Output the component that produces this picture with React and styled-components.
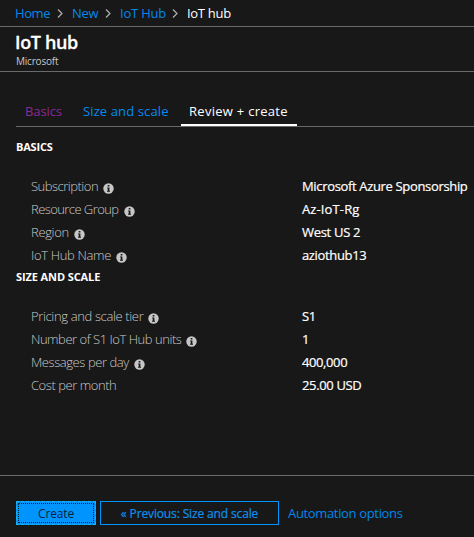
import React from "react";
import styled, { createGlobalStyle } from "styled-components";

const GlobalStyle = createGlobalStyle`
  * { box-sizing: border-box; }
  body { margin: 0; background: #181818; overflow: hidden; }
`;

const Blade = styled.div`
  display: flex;
  flex-direction: column;
  width: 474px;
  height: 537px;
  background: #181818;
  color: #fff;
  font: 400 13px/20px "Open Sans", "Noto Sans", sans-serif;
  white-space: nowrap;
`;

const Text = styled.span`
  letter-spacing: ${(p) => p.$tracking || 0}px;
`;

const Breadcrumb = styled.nav`
  display: grid;
  grid-template-columns: 57px 48px 67px auto;
  height: 27px;
  padding: 3px 0 0 15px;
  border-bottom: 1px solid #6a6a6a;
`;

const Crumb = styled.div`
  display: flex;
  align-items: center;
  justify-content: space-between;
  height: 20px;
  color: ${(p) => (p.$current ? "#fff" : "#0088ea")};
`;

const Chevron = styled.svg`
  width: 6px;
  height: 9px;
  margin-right: ${(p) => p.$gap}px;
  fill: none;
  stroke: #b0b0b0;
  stroke-width: 1.2;
`;

const Header = styled.header`
  height: 45px;
  padding: 3px 0 0 15px;
  border-bottom: 1px solid #6a6a6a;
`;

const Title = styled.h1`
  margin: 0;
  font-size: 18px;
  line-height: 24px;
  font-weight: 600;
  letter-spacing: -0.35px;
  -webkit-text-stroke: 0.3px #fff;
`;

const Publisher = styled.div`
  margin: 0 0 0 1px;
  color: #c8c8c8;
  font-size: 10px;
  line-height: 14px;
  letter-spacing: -0.2px;
`;

const Tabs = styled.div`
  display: flex;
  align-items: flex-end;
  height: 55px;
  margin-left: 16px;
  border-bottom: 1px solid #6a6a6a;
`;

const Tab = styled.div`
  width: ${(p) => p.$width}px;
  height: 26px;
  padding: 1px 0 0 ${(p) => p.$inset}px;
  border-bottom: 2px solid ${(p) => (p.$active ? "#fff" : "transparent")};
  color: ${(p) => p.$color};
`;

const Section = styled.section`
  height: ${(p) => p.$height}px;
  padding: ${(p) => p.$top}px 0 0 16px;
`;

const SectionTitle = styled.h2`
  margin: 0 0 20px;
  font-size: 11px;
  line-height: 16px;
  font-weight: 700;
  letter-spacing: ${(p) => p.$tracking}px;
`;

const Row = styled.div`
  display: grid;
  grid-template-columns: 271px auto;
  height: 23px;
  padding-left: 15px;
  line-height: 23px;
`;

const Label = styled.div`
  display: flex;
  align-items: center;
  gap: 5px;
  color: #c8c8c8;
  font-weight: 300;
`;

const Value = styled.div`
  font-weight: 400;
  -webkit-text-stroke: 0.2px #fff;
`;

const InfoIcon = styled.svg`
  width: 11px;
  height: 11px;
  margin-top: 3px;
`;

const Footer = styled.footer`
  display: flex;
  align-items: flex-start;
  height: 62px;
  margin-top: auto;
  padding: 25px 0 0 16px;
  border-top: 1px solid #6a6a6a;
`;

const Button = styled.button`
  display: flex;
  align-items: center;
  justify-content: center;
  height: 24px;
  width: ${(p) => p.$width}px;
  margin: 0 4px 0 0;
  padding: 2px 0 0;
  font: 400 12px/20px "Open Sans", "Noto Sans", sans-serif;
`;

const CreateButton = styled(Button)`
  border: 1px dashed #18b4ee;
  background: #0094ff;
  color: #06233c;
  outline: 1px dotted #05192b;
  outline-offset: -3px;
`;

const PreviousButton = styled(Button)`
  border: 1px solid #0094ff;
  background: transparent;
  color: #0c90ee;
  -webkit-text-stroke: 0.2px #0c90ee;
`;

const FooterLink = styled.a`
  margin-left: 5px;
  color: #0088ea;
  line-height: 25px;
`;

const crumbs = [
  ["Home", -0.4, 9],
  ["New", -0.3, 9],
  ["IoT Hub", -0.2, 9],
  ["IoT hub", -0.3, 0],
];

const basics = [
  ["Subscription", -0.5, true, "Microsoft Azure Sponsorship", -0.34],
  ["Resource Group", -0.57, true, "Az-IoT-Rg", 0.12],
  ["Region", -0.35, true, "West US 2", -0.3],
  ["IoT Hub Name", -0.34, true, "aziothub13", -0.35],
];

const scale = [
  ["Pricing and scale tier", -0.36, true, "S1", -0.3],
  ["Number of S1 IoT Hub units", -0.47, true, "1", 0],
  ["Messages per day", -0.42, true, "400,000", -0.4],
  ["Cost per month", -0.45, false, "25.00 USD", -0.35],
];

function Info() {
  return (
    <InfoIcon viewBox="0 0 11 11">
      <circle cx="5.5" cy="5.5" r="5.2" fill="#c6c6c6" />
      <path d="M4.7 2h1.7v1.4H4.7zM4 4.4h2.4v3.4H7v.9H4v-.9h.7V5.3H4z" fill="#181818" />
    </InfoIcon>
  );
}

function Rows({ items }) {
  return items.map(([label, labelTracking, info, value, valueTracking]) => (
    <Row key={label}>
      <Label>
        <Text $tracking={labelTracking}>{label}</Text>
        {info && <Info />}
      </Label>
      <Value>
        <Text $tracking={valueTracking}>{value}</Text>
      </Value>
    </Row>
  ));
}

export default function App() {
  return (
    <Blade>
      <GlobalStyle />
      <Breadcrumb>
        {crumbs.map(([name, tracking, gap], i) => (
          <Crumb key={name} $current={i === 3}>
            <Text $tracking={tracking}>{name}</Text>
            {i < 3 && (
              <Chevron $gap={gap} viewBox="0 0 6 9">
                <path d="M1 .5l4 4-4 4" />
              </Chevron>
            )}
          </Crumb>
        ))}
      </Breadcrumb>
      <Header>
        <Title>IoT hub</Title>
        <Publisher>Microsoft</Publisher>
      </Header>
      <Tabs>
        <Tab $width={58} $inset={9} $color="#8a2992">
          <Text $tracking={-0.1}>Basics</Text>
        </Tab>
        <Tab $width={107} $inset={9} $color="#008cf0">
          <Text $tracking={0.12}>Size and scale</Text>
        </Tab>
        <Tab $width={116} $inset={8} $color="#fff" $active>
          <Text $tracking={0.28}>Review + create</Text>
        </Tab>
      </Tabs>
      <Section $top={12} $height={142}>
        <SectionTitle $tracking={-0.2}>BASICS</SectionTitle>
        <Rows items={basics} />
      </Section>
      <Section $top={0} $height={140}>
        <SectionTitle $tracking={-0.1}>SIZE AND SCALE</SectionTitle>
        <Rows items={scale} />
      </Section>
      <Footer>
        <CreateButton $width={80}>
          <Text $tracking={-0.15}>Create</Text>
        </CreateButton>
        <PreviousButton $width={179}>
          <Text $tracking={-0.14}>« Previous: Size and scale</Text>
        </PreviousButton>
        <FooterLink>
          <Text $tracking={-0.34}>Automation options</Text>
        </FooterLink>
      </Footer>
    </Blade>
  );
}
